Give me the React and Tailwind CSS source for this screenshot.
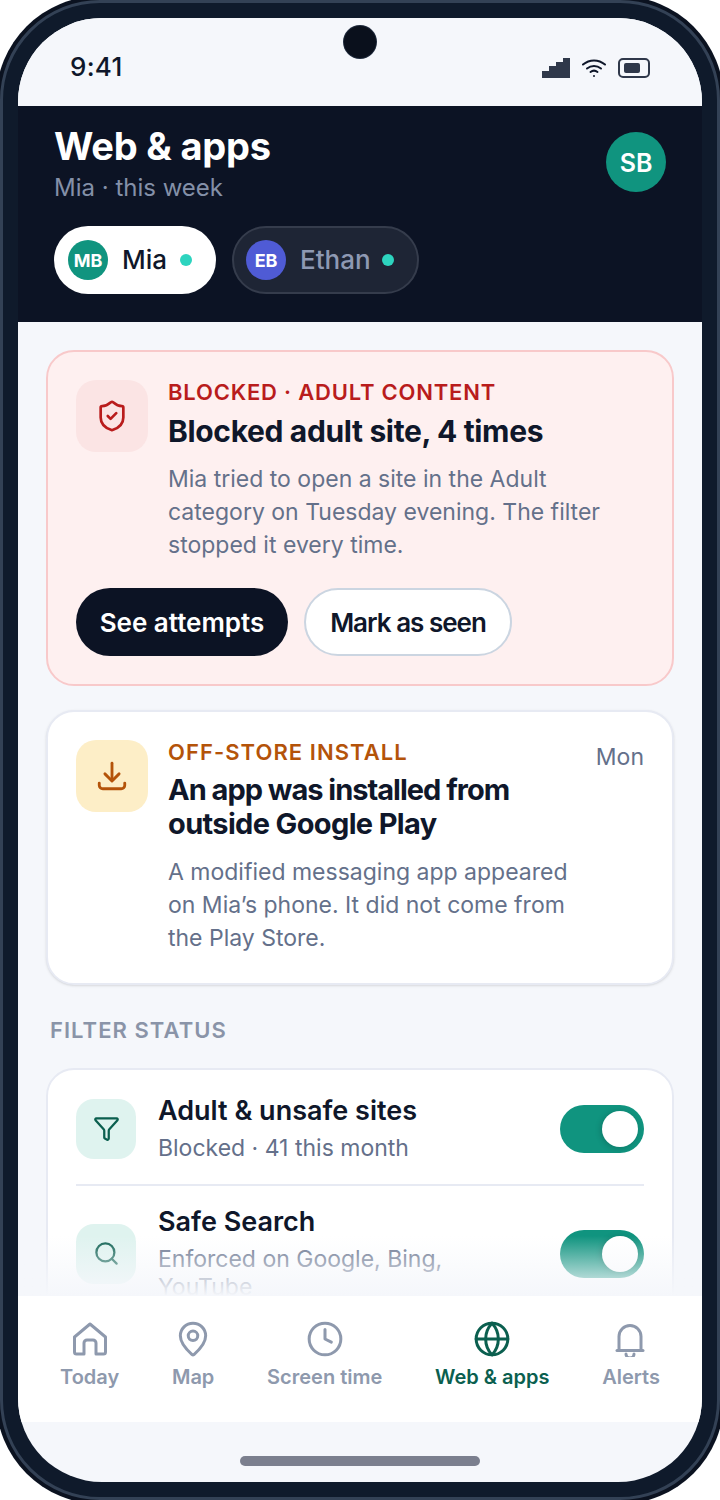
import { Clock, Funnel, Globe, MapPin, Search, ShieldCheck } from 'lucide-react';

function HomeIcon() {
  return (
    <svg width="36" height="36" viewBox="0 0 36 36" fill="none" stroke="currentColor" strokeWidth="3" strokeLinejoin="round" className="my-px">
      <path d="M18 3 2.500 16v15a2 2 0 0 0 2 2H12V22a3 3 0 0 1 3-3h6a3 3 0 0 1 3 3v11h7.500a2 2 0 0 0 2-2V16z" />
    </svg>
  );
}

function BellIcon() {
  return (
    <svg width="36" height="36" viewBox="0 0 36 36" fill="none" stroke="currentColor" strokeWidth="3" strokeLinecap="round" strokeLinejoin="round" className="my-px">
      <path d="M4 29.500h26" />
      <path d="M6 29V15.500a11 11 0 0 1 22 0V29" />
      <path d="M13 33a4 4 0 0 0 8 0" />
    </svg>
  );
}

const NAV_ICON = { size: 38, strokeWidth: 1.9 };

const navItems = [
  { label: 'Today', icon: <HomeIcon /> },
  { label: 'Map', icon: <MapPin {...NAV_ICON} /> },
  { label: 'Screen time', icon: <Clock {...NAV_ICON} /> },
  { label: 'Web & apps', icon: <Globe {...NAV_ICON} />, active: true },
  { label: 'Alerts', icon: <BellIcon /> },
];

function StatusBar() {
  return (
    <div className="relative flex h-[88px] shrink-0 items-end justify-between bg-[#f5f7fb] pb-[23px] pl-[52px] pr-[52px]">
      <span className="text-[26px] leading-[32px] font-medium tracking-[0.3px] text-[#0f172a]">9:41</span>
      <div className="absolute left-[326px] top-[8px] h-8 w-8 rounded-full bg-[#0a101c] ring-1 ring-[#1e293b]" />
      <div className="mb-[5px] flex items-center gap-3">
        <svg width="28" height="20" viewBox="0 0 28 20" fill="#2f384a">
          <path d="M0 13h7V8h7V4h7V0h7v20H0z" />
        </svg>
        <svg width="24" height="20" viewBox="0 0 24 20" fill="none" stroke="#0f172a" strokeWidth="2" strokeLinecap="round">
          <path d="M1 6.500c6.500-5.500 15.500-5.500 22 0" />
          <path d="M5 10.500c4.200-3.500 9.800-3.500 14 0" />
          <path d="M8.500 14c2-1.600 5-1.600 7 0" />
          <circle cx="12" cy="18" r="1" fill="#0f172a" stroke="none" />
        </svg>
        <div className="flex h-5 w-8 items-center rounded-[5px] border-2 border-[#2f384a] py-[3px] pl-[4px]">
          <div className="h-full w-[16px] rounded-[2px] bg-[#2f384a]" />
        </div>
      </div>
    </div>
  );
}

function Header() {
  return (
    <div className="h-[216px] shrink-0 bg-[#0c1324] px-9 pt-[19px]">
      <div className="flex items-start justify-between">
        <div>
          <h1 className="text-[38px] leading-[42px] font-bold tracking-[-0.2px] text-white">Web &amp; apps</h1>
          <p className="mt-[4px] text-[24px] leading-[34px] text-[#8490a8]">Mia · this week</p>
        </div>
        <div className="mt-[7px] flex h-[60px] w-[60px] items-center justify-center rounded-full bg-[#10947f] pt-[3px] text-[25px] font-semibold text-white">
          SB
        </div>
      </div>
      <div className="mt-[21px] flex gap-4">
        <div className="flex h-[68px] items-center rounded-full bg-white pl-[14px] pr-6 text-[#0f172a]">
          <div className="flex h-10 w-10 items-center justify-center rounded-full bg-[#10947f] text-[18px] font-bold text-white">MB</div>
          <span className="-mt-[2px] ml-[14px] text-[26px] font-medium">Mia</span>
          <span className="ml-[13px] h-3 w-3 rounded-full bg-[#2dd4bf]" />
        </div>
        <div className="flex h-[68px] items-center rounded-full border-2 border-[#353c4c] bg-[#1e2535] pl-3 pr-[23px] text-[#8e99b3]">
          <div className="flex h-10 w-10 items-center justify-center rounded-full bg-[#4f5bd5] text-[18px] font-bold text-white">EB</div>
          <span className="-mt-[2px] ml-[14px] text-[26px] font-medium">Ethan</span>
          <span className="ml-[11px] h-3 w-3 rounded-full bg-[#2dd4bf]" />
        </div>
      </div>
    </div>
  );
}

function BlockedCard() {
  return (
    <div className="rounded-[28px] border-2 border-[#f8c9ca] bg-[#fef0f0] p-7">
      <div className="flex gap-5">
        <div className="flex h-[72px] w-[72px] shrink-0 items-center justify-center rounded-[20px] bg-[#fbe4e4]">
          <ShieldCheck size={34} strokeWidth={1.9} className="text-[#b91c1c]" />
        </div>
        <div>
          <p className="-mt-[2px] text-[22px] leading-[28px] font-semibold tracking-[0.8px] text-[#b91c1c]">BLOCKED · ADULT CONTENT</p>
          <h2 className="mt-[8px] text-[30px] leading-[34px] font-bold tracking-[-0.35px] text-[#0f172a]">Blocked adult site, 4 times</h2>
          <p className="mt-[15px] text-[23px] leading-[33px] text-[#64708a]">
            Mia tried to open a site in the Adult
            <br />
            category on Tuesday evening. The filter
            <br />
            stopped it every time.
          </p>
        </div>
      </div>
      <div className="mt-[26px] flex gap-4">
        <button className="h-[68px] w-[212px] rounded-full bg-[#0c1324] text-[26px] font-semibold text-white">See attempts</button>
        <button className="h-[68px] w-[208px] rounded-full border-2 border-[#cbd5e1] bg-white text-[26px] font-semibold tracking-[-1px] text-[#0f172a]">Mark as seen</button>
      </div>
    </div>
  );
}

function InstallCard() {
  return (
    <div className="mt-6 rounded-[28px] border-2 border-[#e7eaf3] bg-white px-7 pb-7 pt-7 shadow-sm">
      <div className="flex gap-5">
        <div className="flex h-[72px] w-[72px] shrink-0 items-center justify-center rounded-[20px] bg-[#fdeec7]">
          <svg width="34" height="34" viewBox="0 0 24 24" fill="none" stroke="#b45309" strokeWidth="2" strokeLinecap="round" strokeLinejoin="round">
            <path d="M12 3v12" />
            <path d="M7 10.500l5 5 5-5" />
            <path d="M3 17v1.500a2.500 2.500 0 0 0 2.500 2.500h13a2.500 2.500 0 0 0 2.500-2.500V17" />
          </svg>
        </div>
        <div className="flex-1">
          <div className="-mt-[2px] flex items-start justify-between">
            <p className="text-[22px] leading-[28px] font-semibold tracking-[1.05px] text-[#b45309]">OFF-STORE INSTALL</p>
            <span className="mt-[2px] text-[23px] leading-[34px] text-[#64708a]">Mon</span>
          </div>
          <h2 className="-mt-[1px] text-[29px] leading-[34px] font-bold text-[#0f172a]">
            <span className="tracking-[-1px]">An app was installed from</span>
            <br />
            <span className="tracking-[-0.65px]">outside Google Play</span>
          </h2>
          <p className="mt-[15px] text-[23px] leading-[33px] text-[#64708a]">
            A modified messaging app appeared
            <br />
            on Mia’s phone. It did not come from
            <br />
            the Play Store.
          </p>
        </div>
      </div>
    </div>
  );
}

function Toggle() {
  return (
    <div className="flex h-12 w-[84px] shrink-0 items-center justify-end rounded-full bg-[#10947f] pr-[6px]">
      <div className="h-9 w-9 rounded-full bg-white shadow-[-1px_1px_6px_rgba(0,0,0,0.2)]" />
    </div>
  );
}

function FilterRow({ Icon, title, sub, first }) {
  return (
    <div className={first ? 'flex items-center gap-[22px] border-b-2 border-[#e7eaf3] pb-[22px]' : 'flex items-center gap-[22px] pt-5'}>
      <div className="flex h-[60px] w-[60px] shrink-0 items-center justify-center rounded-[18px] bg-[#dff3ef]">
        <Icon size={27} strokeWidth={2} className="text-[#0b5f4f]" />
      </div>
      <div className="flex-1">
        <p className="text-[27px] leading-[32px] font-semibold text-[#0f172a]">{title}</p>
        <p className="mt-[7px] text-[23px] leading-[28px] text-[#64708a]">{sub}</p>
      </div>
      <Toggle />
    </div>
  );
}

function FilterStatus() {
  return (
    <>
      <p className="ml-1 mt-[31px] text-[22px] leading-[28px] font-semibold tracking-[1.05px] text-[#8a94a8]">FILTER STATUS</p>
      <div className="mt-[24px] rounded-[28px] border-2 border-[#e7eaf3] bg-white px-7 pb-7 pt-[25px]">
        <FilterRow Icon={Funnel} title="Adult & unsafe sites" sub="Blocked · 41 this month" first />
        <FilterRow
          Icon={Search}
          title="Safe Search"
          sub={
            <>
              Enforced on Google, Bing,
              <br />
              YouTube
            </>
          }
        />
      </div>
    </>
  );
}

function BottomNav() {
  return (
    <div className="flex h-[126px] shrink-0 items-start justify-between bg-white px-[42px] pt-[24px]">
      {navItems.map(({ label, icon, active }) => (
        <div key={label} className={active ? 'flex flex-col items-center text-[#0b5f4f]' : 'flex flex-col items-center text-[#8e99ad]'}>
          {icon}
          <span className="mt-[5px] text-[20px] leading-[28px] font-semibold">{label}</span>
        </div>
      ))}
    </div>
  );
}

export default function App() {
  return (
    <div className="h-[1500px] w-[720px] overflow-hidden bg-white font-['Inter',sans-serif]">
      <div className="h-full w-full rounded-[100px] border-[3px] border-[#334155] bg-[#0f1a2b] p-[15px] shadow-[0_0_0_4px_#0b1220]">
        <div className="flex h-full flex-col overflow-hidden rounded-[84px] bg-[#f5f7fb]">
          <StatusBar />
          <Header />
          <div className="relative min-h-0 flex-1 overflow-hidden bg-[#f5f7fb] px-7 pt-7">
            <BlockedCard />
            <InstallCard />
            <FilterStatus />
            <div className="absolute inset-x-0 bottom-0 h-[60px] bg-gradient-to-b from-transparent to-[#f5f7fb]" />
          </div>
          <BottomNav />
          <div className="flex h-[60px] shrink-0 items-start justify-center pt-[34px]">
            <div className="h-[10px] w-[240px] rounded-full bg-[#7b7f8e]" />
          </div>
        </div>
      </div>
    </div>
  );
}
